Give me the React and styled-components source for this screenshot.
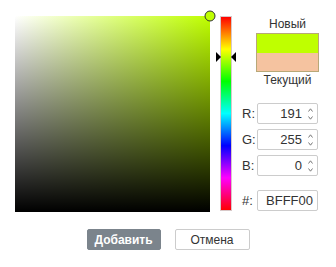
import React from "react";
import styled, { createGlobalStyle } from "styled-components";

const GlobalStyle = createGlobalStyle`
  html, body {
    margin: 0;
    padding: 0;
    background: #fff;
    font-family: "Liberation Sans", Arial, sans-serif;
    color: #333;
  }
`;

const Dialog = styled.div`
  width: 336px;
  height: 267px;
  box-sizing: border-box;
  padding: 16px 0 0 15px;
`;

const Top = styled.div`
  display: flex;
  align-items: flex-start;
`;

const Square = styled.div`
  position: relative;
  width: 195px;
  height: 196px;
  background: linear-gradient(to top, #000, rgba(0, 0, 0, 0)),
    linear-gradient(to right, #fff, hsl(${(p) => p.$hue}, 100%, 50%));
`;

const Marker = styled.div`
  position: absolute;
  width: 11px;
  height: 11px;
  border: 1px solid #333;
  border-radius: 50%;
  box-sizing: border-box;
  background: ${(p) => p.$color};
  transform: translate(-50%, -50%);
`;

const HueWrap = styled.div`
  position: relative;
  margin-left: 10px;
  width: 12px;
  height: 195px;
`;

const HueBar = styled.div`
  width: 12px;
  height: 195px;
  box-sizing: border-box;
  border: 1px solid #d8c8c8;
  background: linear-gradient(
    to bottom,
    #f00 0%,
    #ff0 16.66%,
    #0f0 33.33%,
    #0ff 50%,
    #00f 66.66%,
    #f0f 83.33%,
    #f00 100%
  );
`;

const Arrow = styled.div`
  position: absolute;
  width: 0;
  height: 0;
  border-top: 5px solid transparent;
  border-bottom: 5px solid transparent;
  transform: translateY(-50%);
  ${(p) =>
    p.$side === "left"
      ? `left: -4px; border-left: 5px solid #000;`
      : `right: -4px; border-right: 5px solid #000;`}
`;

const Side = styled.div`
  margin-left: 10px;
  width: 77px;
  display: flex;
  flex-direction: column;
`;

const Preview = styled.div`
  margin-left: 14px;
  width: 63px;
  display: flex;
  flex-direction: column;
  align-items: center;
`;

const PreviewLabel = styled.div`
  height: 17px;
  line-height: 17px;
  font-size: 12px;
  color: #333;
  white-space: nowrap;
`;

const Swatch = styled.div`
  width: 63px;
  height: 39px;
  box-sizing: border-box;
  border: 1px solid #b8a878;
  display: flex;
  flex-direction: column;
`;

const SwatchHalf = styled.div`
  flex: 1;
  background: ${(p) => p.$color};
`;

const Fields = styled.div`
  margin-top: 14px;
  display: flex;
  flex-direction: column;
  gap: 5px;
`;

const FieldRow = styled.div`
  display: flex;
  align-items: center;
  height: 21px;
  margin-top: ${(p) => (p.$gapTop ? "9px" : "0")};
`;

const FieldLabel = styled.label`
  width: 15px;
  font-size: 13px;
  color: #333;
`;

const InputBox = styled.div`
  width: 61px;
  height: 21px;
  box-sizing: border-box;
  border: 1px solid #ccc;
  border-radius: 2px;
  display: flex;
  align-items: center;
  padding-right: ${(p) => (p.$spin ? "3px" : "4px")};
`;

const Value = styled.span`
  flex: 1;
  text-align: right;
  font-size: 13px;
  color: #333;
  padding-right: ${(p) => (p.$spin ? "5px" : "0")};
`;

const Spinner = styled.div`
  display: flex;
  flex-direction: column;
  gap: 4px;
  width: 7px;
`;

const Buttons = styled.div`
  display: flex;
  justify-content: center;
  gap: 14px;
  margin-top: 17px;
  padding-right: 15px;
`;

const Button = styled.button`
  height: 21px;
  width: ${(p) => (p.$primary ? "74px" : "75px")};
  padding: 0;
  font-family: "Liberation Sans", Arial, sans-serif;
  font-size: 12px;
  font-weight: ${(p) => (p.$primary ? "bold" : "normal")};
  color: ${(p) => (p.$primary ? "#fff" : "#333")};
  background: ${(p) => (p.$primary ? "#7b848c" : "#fff")};
  border: 1px solid ${(p) => (p.$primary ? "#7b848c" : "#ccc")};
  border-radius: 2px;
`;

const Chevron = ({ up }) => (
  <svg width="7" height="4" viewBox="0 0 7 4">
    <polyline
      points={up ? "1.5,3.5 3.5,0.8 5.5,3.5" : "1.5,0.5 3.5,3.2 5.5,0.5"}
      fill="none"
      stroke="#777"
      strokeWidth="1"
    />
  </svg>
);

const Field = ({ label, value, spin, gapTop }) => (
  <FieldRow $gapTop={gapTop}>
    <FieldLabel>{label}</FieldLabel>
    <InputBox $spin={spin}>
      <Value $spin={spin}>{value}</Value>
      {spin && (
        <Spinner>
          <Chevron up />
          <Chevron />
        </Spinner>
      )}
    </InputBox>
  </FieldRow>
);

export default function App() {
  const hue = 75;
  const huePos = (hue / 360) * 195;
  return (
    <>
      <GlobalStyle />
      <Dialog>
        <Top>
          <Square $hue={hue}>
            <Marker $color="#bfff00" style={{ left: "100%", top: 0 }} />
          </Square>
          <HueWrap>
            <HueBar />
            <Arrow $side="left" style={{ top: huePos }} />
            <Arrow $side="right" style={{ top: huePos }} />
          </HueWrap>
          <Side>
            <Preview>
              <PreviewLabel>Новый</PreviewLabel>
              <Swatch>
                <SwatchHalf $color="#bfff00" />
                <SwatchHalf $color="#f5c3a0" />
              </Swatch>
              <PreviewLabel>Текущий</PreviewLabel>
            </Preview>
            <Fields>
              <Field label="R:" value="191" spin />
              <Field label="G:" value="255" spin />
              <Field label="B:" value="0" spin />
              <Field label="#:" value="BFFF00" gapTop />
            </Fields>
          </Side>
        </Top>
        <Buttons>
          <Button $primary>Добавить</Button>
          <Button>Отмена</Button>
        </Buttons>
      </Dialog>
    </>
  );
}
